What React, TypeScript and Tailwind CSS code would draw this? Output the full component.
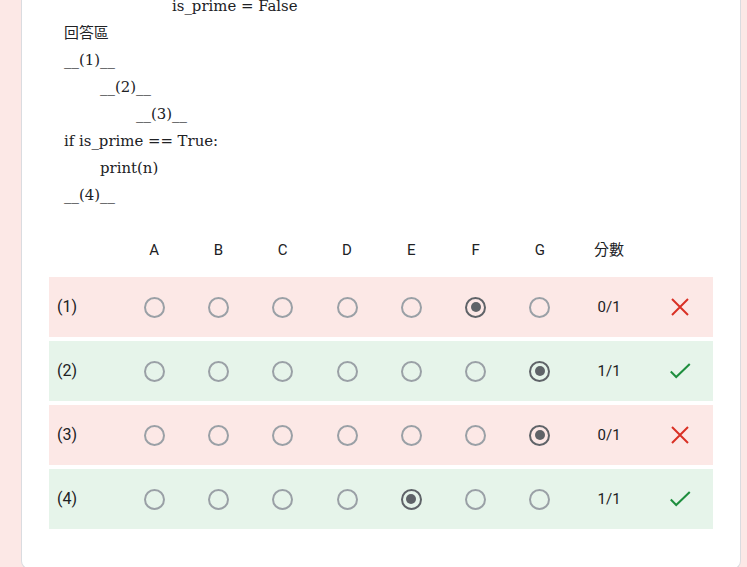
import React from 'react';

const cols = ['A', 'B', 'C', 'D', 'E', 'F', 'G'];

const rows = [
  { label: '(1)', picked: 5, score: '0/1', ok: false },
  { label: '(2)', picked: 6, score: '1/1', ok: true },
  { label: '(3)', picked: 6, score: '0/1', ok: false },
  { label: '(4)', picked: 4, score: '1/1', ok: true },
];

const codeLines = [
  { text: 'is_prime = False', indent: 'pl-[108px]' },
  { text: '回答區', indent: '' },
  { text: '__(1)__', indent: '' },
  { text: '__(2)__', indent: 'pl-[36px]' },
  { text: '__(3)__', indent: 'pl-[72px]' },
  { text: 'if is_prime == True:', indent: '' },
  { text: 'print(n)', indent: 'pl-[36px]' },
  { text: '__(4)__', indent: '' },
];

const Radio: React.FC<{ checked: boolean }> = ({ checked }) => (
  <div
    className={`w-[21px] h-[21px] rounded-full border-2 flex items-center justify-center ${
      checked ? 'border-[#5f6368]' : 'border-[#9aa0a6]'
    }`}
  >
    {checked && <div className="w-[10px] h-[10px] rounded-full bg-[#5f6368]" />}
  </div>
);

const CrossIcon = () => (
  <svg width="24" height="24" viewBox="0 0 24 24" fill="none">
    <path d="M4 4L20 20M20 4L4 20" stroke="#d93025" strokeWidth="2" />
  </svg>
);

const CheckIcon = () => (
  <svg width="26" height="26" viewBox="0 0 24 24" fill="none">
    <path d="M3.5 12.5L8.5 17.5L21 5.5" stroke="#1e8e3e" strokeWidth="1.9" />
  </svg>
);

const grid = 'grid grid-cols-[73px_repeat(7,64.3px)_74px_67px] items-center';

export default function App() {
  return (
    <div className="h-screen bg-[#fce8e6] pl-[21px] pr-[6px] overflow-hidden">
      <div className="bg-white border border-[#dadce0] border-t-0 rounded-b-lg h-[576px] px-[27px]">
        {/* question body */}
        <div className="-mt-[7px] pl-[15px] text-[#202124] text-[14.9px] leading-[27px] font-['DejaVu_Serif','Noto_Sans_CJK_TC',serif]">
          {codeLines.map((line, i) => (
            <div key={i} className={line.indent}>
              {line.text}
            </div>
          ))}
        </div>

        {/* answer grid */}
        <div className="mt-[20px] font-['Roboto','Noto_Sans_CJK_TC',sans-serif] text-[#202124]">
          <div className={`${grid} h-[48px] pb-[5px] text-[15px]`}>
            <div />
            {cols.map((c) => (
              <div key={c} className="text-center">{c}</div>
            ))}
            <div className="text-center">分數</div>
            <div />
          </div>
          <div className="flex flex-col gap-[4px]">
            {rows.map((r) => (
              <div
                key={r.label}
                className={`${grid} h-[60px] ${r.ok ? 'bg-[#e6f4ea]' : 'bg-[#fce8e6]'}`}
              >
                <div className="pl-[8px] text-[16px]">{r.label}</div>
                {cols.map((c, i) => (
                  <div key={c} className="flex justify-center">
                    <Radio checked={i === r.picked} />
                  </div>
                ))}
                <div className="text-center text-[15px]">{r.score}</div>
                <div className="flex justify-center">{r.ok ? <CheckIcon /> : <CrossIcon />}</div>
              </div>
            ))}
          </div>
        </div>
      </div>
    </div>
  );
}
